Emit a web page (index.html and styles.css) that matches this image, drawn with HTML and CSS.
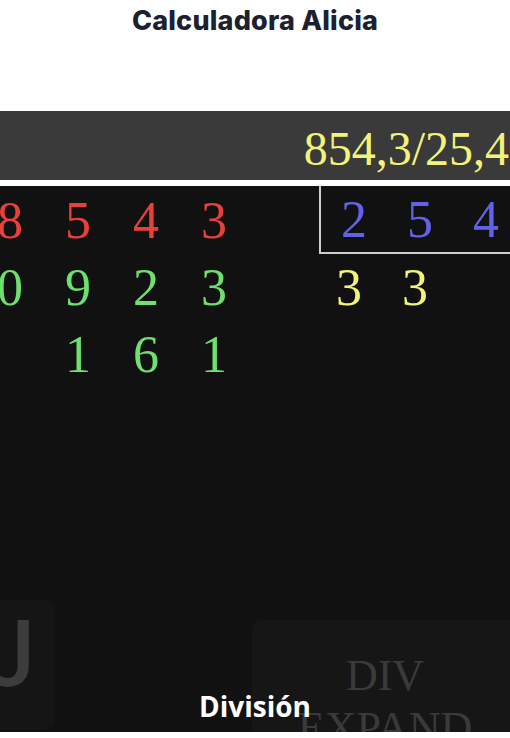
FILE: index.html
```html
<!DOCTYPE html>
<html lang="es">
<head>
<meta charset="utf-8">
<title>Calculadora Alicia</title>
<link rel="stylesheet" href="styles.css">
</head>
<body>
<header class="title">Calculadora Alicia</header>
<div class="display"><span class="expr">854,3/25,4</span></div>
<main class="work">
  <section class="board">
    <div class="dividend">
      <span class="d red">8</span><span class="d red">5</span><span class="d red">4</span><span class="d red">3</span>
      <span class="d green">0</span><span class="d green">9</span><span class="d green">2</span><span class="d green">3</span>
      <span class="d"></span><span class="d green">1</span><span class="d green">6</span><span class="d green">1</span>
    </div>
    <div class="divisor-col">
      <div class="divisor">
        <span class="d blue">2</span><span class="d blue">5</span><span class="d blue">4</span>
      </div>
      <div class="quotient">
        <span class="d yellow">3</span><span class="d yellow">3</span>
      </div>
    </div>
  </section>
  <section class="keys">
    <div class="key key-left"><span class="key-j">J</span></div>
    <div class="key key-right"><span class="kl">DIV</span><span class="kl">EXPAND</span></div>
  </section>
  <div class="caption">División</div>
</main>
</body>
</html>
```
FILE: styles.css
```css
html, body {
  margin: 0;
  padding: 0;
}
body {
  width: 510px;
  height: 738px;
  overflow: hidden;
  background: #ffffff;
}
.title {
  height: 111px;
  box-sizing: border-box;
  padding-top: 4px;
  padding-left: 0;
  text-align: center;
  font-family: "Inter", "Liberation Sans", sans-serif;
  font-weight: 800;
  font-size: 27px;
  line-height: 34px;
  color: #1c2130;
  letter-spacing: 0.2px;
}
.display {
  height: 69px;
  box-sizing: border-box;
  background: #3a3a3a;
  overflow: hidden;
  white-space: nowrap;
  text-align: right;
  padding-top: 7px;
  padding-right: 1px;
  font-family: "Liberation Serif", serif;
  font-size: 48px;
  line-height: 62px;
  color: #f3f37a;
}
.work {
  position: relative;
  margin-top: 6px;
  height: 546px;
  background: #111111;
  overflow: hidden;
  display: flex;
  flex-direction: column;
}
.board {
  display: flex;
  align-items: flex-start;
}
.d {
  font-family: "Liberation Serif", serif;
  font-size: 52px;
  line-height: 67px;
  text-align: center;
}
.dividend {
  margin-left: -24px;
  padding-top: 1px;
  display: grid;
  grid-template-columns: repeat(4, 68px);
}
.divisor-col {
  margin-left: 71px;
  display: flex;
  flex-direction: column;
}
.divisor {
  display: grid;
  grid-template-columns: repeat(3, 66px);
  border-left: 2px solid #cfcfcf;
  border-bottom: 2px solid #cfcfcf;
  padding-top: 1px;
}
.divisor .d {
  line-height: 65px;
}
.quotient {
  display: grid;
  grid-template-columns: repeat(3, 66px);
}
.quotient .d {
  position: relative;
  left: -3px;
}
.red { color: #e8403a; }
.green { color: #6ee06e; }
.blue { color: #6262e6; }
.yellow { color: #f3f37a; }
.keys {
  margin-top: auto;
  display: flex;
  align-items: flex-start;
  justify-content: space-between;
}
.key {
  border-radius: 10px;
}
.key-left {
  margin-left: -70px;
  width: 125px;
  height: 130px;
  background: #151515;
  text-align: right;
  box-sizing: border-box;
  padding-right: 20px;
  margin-bottom: 2px;
}
.key-j {
  font-family: "Roboto", "Liberation Sans", sans-serif;
  font-weight: 500;
  font-size: 92px;
  line-height: 110px;
  color: #3c3c3c;
}
.key-right {
  margin-top: 20px;
  margin-right: -8px;
  width: 266px;
  height: 130px;
  margin-bottom: -20px;
  background: #161616;
  display: flex;
  flex-direction: column;
  align-items: center;
  padding-top: 30px;
  box-sizing: border-box;
}
.kl {
  font-family: "Liberation Serif", serif;
  font-size: 44px;
  line-height: 52px;
  color: #3a3a3a;
}
.caption {
  position: absolute;
  left: 0;
  right: 0;
  bottom: 10px;
  text-align: center;
  font-family: "Open Sans", "Liberation Sans", sans-serif;
  font-weight: 700;
  font-size: 28px;
  line-height: 32px;
  color: #ffffff;
}
```
